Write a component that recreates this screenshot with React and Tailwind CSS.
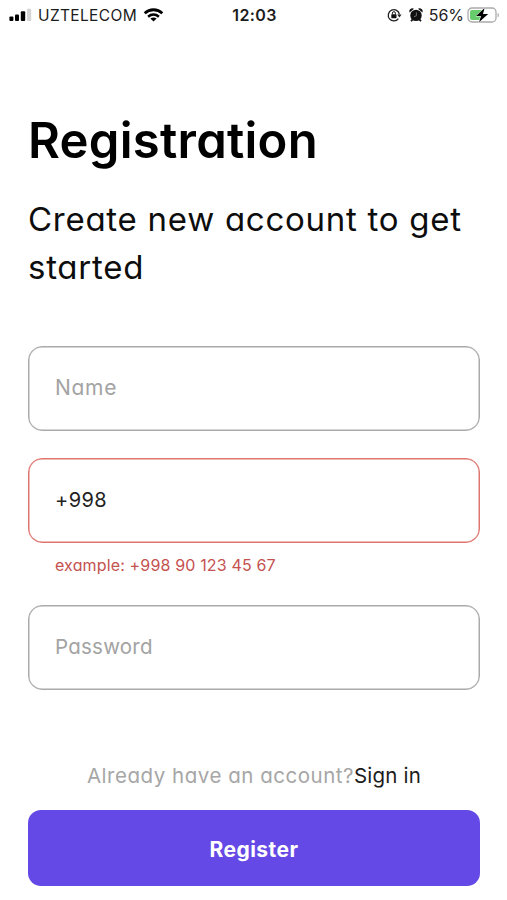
import React, { useState } from "react";

const StatusBar = () => (
  <div className="flex h-[30px] items-center pl-[9px] pr-[7px] text-[#1c1c1c]">
    <div className="flex flex-1 items-center">
      <svg width="23" height="14" viewBox="0 0 23 14">
        <rect x="0.4" y="8.5" width="4" height="4.5" rx="1" fill="#000" />
        <rect x="6" y="6.5" width="4" height="6.5" rx="1" fill="#000" />
        <rect x="11.8" y="3.2" width="4.4" height="9.8" rx="1" fill="#000" />
        <rect x="18" y="0.8" width="4.2" height="12.2" rx="1" fill="#d4d4d4" />
      </svg>
      <span className="ml-[6px] pt-px text-[15.5px] leading-[29px] tracking-[0.35px]">UZTELECOM</span>
      <svg className="ml-[6px]" width="21" height="14" viewBox="0 0 20 14" fill="none">
        <path d="M1.2 5.2C6.2 0.6 13.8 0.6 18.8 5.2" stroke="#000" strokeWidth="2.8" />
        <path d="M4.6 8.7C7.8 5.9 12.2 5.9 15.4 8.7" stroke="#000" strokeWidth="2.5" />
        <path d="M10 13.6L6.9 10.5C8.7 9 11.3 9 13.1 10.5Z" fill="#000" />
      </svg>
    </div>
    <span className="text-[16px] font-semibold leading-[30px] tracking-[0.4px]">12:03</span>
    <div className="flex flex-1 items-center justify-end">
      <svg width="15" height="14" viewBox="0 0 15 14" fill="none">
        <path d="M11.4 10.6A5.6 5.6 0 1 1 12.4 6.4" stroke="#222" strokeWidth="1.3" />
        <path d="M10.2 6.4H14.6L12.4 9.4Z" fill="#222" />
        <rect x="4.3" y="6.2" width="5.2" height="4" rx="0.6" fill="#111" />
        <path d="M5.4 6.4V5.2a1.5 1.5 0 0 1 3 0v1.2" stroke="#111" strokeWidth="1" />
      </svg>
      <svg className="ml-[7px]" width="14" height="14" viewBox="0 0 14 14" fill="none">
        <circle cx="7" cy="7.4" r="5.7" fill="#111" />
        <path d="M0.6 4.4A3 3 0 0 1 5 0.7ZM13.4 4.4A3 3 0 0 0 9 0.7Z" fill="#111" />
        <path d="M2 13.2L4 11.2M12 13.2L10 11.2" stroke="#111" strokeWidth="1.8" />
        <path d="M7.4 4.4V7.8L5 8.6" stroke="#888" strokeWidth="0.8" />
      </svg>
      <span className="ml-[6px] text-[16px] leading-[30px]">56%</span>
      <svg className="ml-[3px]" width="33" height="17" viewBox="0 0 33 17">
        <rect x="1" y="1" width="28" height="14" rx="4" fill="#fff" stroke="#ababab" strokeWidth="1.3" />
        <path d="M5 3H15V13H5a2 2 0 0 1-2-2V5a2 2 0 0 1 2-2Z" fill="#67cc6b" />
        <path d="M30.6 5.8V10.4C32.4 9.6 32.4 6.6 30.6 5.8Z" fill="#ababab" />
        <path
          d="M17.6 1L9 9h5l-2 6.2L21.2 7H16Z"
          fill="#000"
          stroke="#fff"
          strokeWidth="1"
          paintOrder="stroke"
        />
      </svg>
    </div>
  </div>
);

const fieldClass =
  "block h-[85px] w-full rounded-[14px] border bg-white px-[26px] pb-[2px] text-[#222] outline-none placeholder:text-[#a3a3a3] placeholder:opacity-100";
const normalBorder = "border-[#aaaaaa] shadow-[inset_0_0_0_0.5px_#aaaaaa]";
const errorBorder = "border-[#df766f] shadow-[inset_0_0_0_0.5px_#df766f]";

const App = () => {
  const [name, setName] = useState("");
  const [phone, setPhone] = useState("+998");
  const [password, setPassword] = useState("");

  const phoneInvalid = !/^\+998\d{9}$/.test(phone.replace(/\s/g, ""));

  return (
    <div className="flex h-[900px] w-[507px] flex-col overflow-hidden bg-white font-['Inter',sans-serif] [font-feature-settings:'cv11']">
      <StatusBar />

      <form
        className="flex flex-1 flex-col pl-[28px] pr-[27px] pt-[76px]"
        onSubmit={(e) => e.preventDefault()}
      >
        <h1 className="text-[49px] font-semibold leading-[70px] tracking-[0.25px] text-black">
          Registration
        </h1>
        <p className="mt-[19px] text-[33px] leading-[48px] tracking-[0.73px] text-[#0d0d0d]">
          Create new account to get started
        </p>

        {/* Fields */}
        <div className="mt-[55px]">
          <input
            type="text"
            className={`${fieldClass} ${normalBorder} text-[21px] tracking-[0.7px]`}
            placeholder="Name"
            value={name}
            onChange={(e) => setName(e.target.value)}
          />
        </div>
        <div className="mt-[27px]">
          <input
            type="tel"
            className={`${fieldClass} ${phoneInvalid ? errorBorder : normalBorder} text-[20px] tracking-[0.4px]`}
            value={phone}
            onChange={(e) => setPhone(e.target.value)}
          />
          <p className="h-[62px] pl-[27px] pt-[10px] text-[16px] leading-[24px] tracking-[0.15px] text-[#c4524f]">
            {phoneInvalid && "example: +998 90 123 45 67"}
          </p>
        </div>
        <input
          type="password"
          className={`${fieldClass} ${normalBorder} text-[20.5px] tracking-[0.25px]`}
          placeholder="Password"
          value={password}
          onChange={(e) => setPassword(e.target.value)}
        />

        {/* Footer */}
        <div className="mt-[71px] flex items-center justify-center text-[20.5px] leading-[30px]">
          <span className="tracking-[0.52px] text-[#a6a6a6]">Already have an account?</span>
          <a href="#" className="tracking-[0.2px] text-[#1c1c1c]">
            Sign in
          </a>
        </div>
        <button
          type="submit"
          className="mt-[19px] h-[76px] rounded-[13px] bg-[#6549e6] pt-[3px] text-[21px] font-bold tracking-[0.45px] text-white"
        >
          Register
        </button>
      </form>
    </div>
  );
};

export default App;
